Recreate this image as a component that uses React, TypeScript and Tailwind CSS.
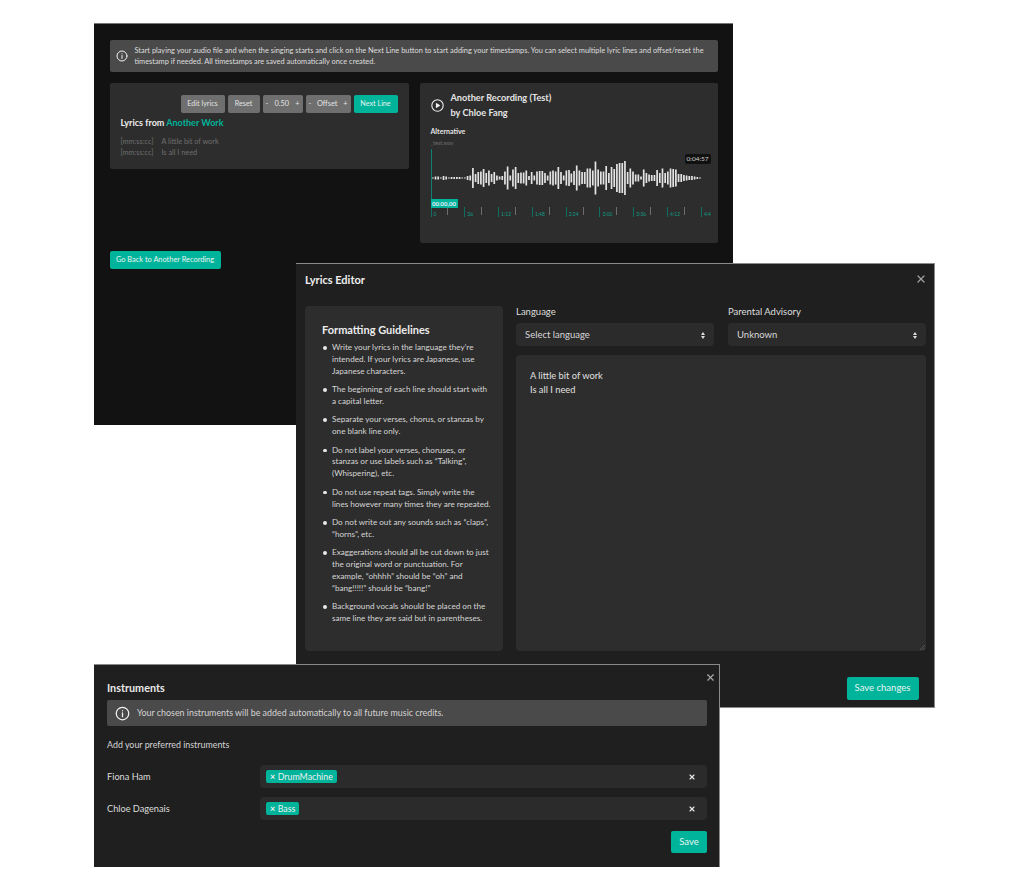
import type { ReactNode } from "react";
import { X } from "lucide-react";

const barsA = [1,3,3,1,4,3,1,2,2,2,2,1,1,4,5,20,8,12,13,18,10,15,8,12,5,3,4,13,23,5,17,22,10,11,11,15,4,12,5,13,14,14,10,5,13,15,13,22,12,5,15,16];
const barsB = [9,14,25,15,12,12,19,19,15,33,17,13,13,24,10,22,18,28,30,30,34,12,19,13,7,7,3,17,10,7,6,6,16,10,19,10,13,19,18,17,8,8,6,5,4,4,3,2,1];
const teal = ["0","36","1:12","1:48","2:24","3:00","3:36","4:12","4:4"];

const guidelines = [
  "Write your lyrics in the language they’re\nintended. If your lyrics are Japanese, use\nJapanese characters.",
  "The beginning of each line should start with\na capital letter.",
  "Separate your verses, chorus, or stanzas by\none blank line only.",
  "Do not label your verses, choruses, or\nstanzas or use labels such as “Talking”,\n(Whispering), etc.",
  "Do not use repeat tags. Simply write the\nlines however many times they are repeated.",
  "Do not write out any sounds such as “claps”,\n“horns”, etc.",
  "Exaggerations should all be cut down to just\nthe original word or punctuation. For\nexample, “ohhhh” should be “oh” and\n“bang!!!!!” should be “bang!”",
  "Background vocals should be placed on the\nsame line they are said but in parentheses.",
];

const InfoIcon = ({ size }: { size: number }) => (
  <svg width={size} height={size} viewBox="0 0 24 24" fill="none" stroke="#f2f2f2" strokeWidth="2" strokeLinecap="round" className="shrink-0">
    <circle cx="12" cy="12" r="10" />
    <path d="M12 11v6" />
    <path d="M12 7.5v.2" />
  </svg>
);

const SelectArrows = () => (
  <svg width="4" height="7" viewBox="0 0 4 7" fill="#dcdcdc" className="shrink-0">
    <path d="M2 0l2 3H0z" />
    <path d="M2 7L0 4h4z" />
  </svg>
);

const GreyBtn = ({ children, w }: { children: ReactNode; w: string }) => (
  <div className={`flex h-[18px] items-center justify-center rounded-[2px] bg-[#6f6f6f] text-[7.2px] text-[#e2e2e2] ${w}`}>{children}</div>
);

const Stepper = ({ value, w }: { value: string; w: string }) => (
  <div className={`flex h-[18px] items-center justify-between rounded-[2px] bg-[#6f6f6f] px-[3px] text-[7.4px] text-[#e2e2e2] ${w}`}>
    <span>-</span>
    <span>{value}</span>
    <span>+</span>
  </div>
);

const Waveform = () => (
  <svg width="280" height="40" viewBox="0 0 280 40" className="block">
    {barsA.map((h, i) => (
      <rect key={i} x={i * 2.67 + 1} y={20 - h / 2} width="1.7" height={h} fill="#e4e4e4" />
    ))}
    {barsB.map((h, i) => (
      <rect key={i} x={i * 2.68 + 139.5} y={20 - h / 2} width="1.7" height={h} fill="#e4e4e4" />
    ))}
  </svg>
);

const Timeline = () => (
  <div className="flex h-[10px] w-[288px] overflow-hidden">
    {teal.map((t, i) => (
      <div key={t} className="flex w-[33.8px] shrink-0">
        <div className="flex w-[16.9px] shrink-0 items-end border-l border-[#0d6f60] pl-[2px] text-[5px] leading-[6px] text-[#0f9c86]">{t}</div>
        {i < 8 && <div className="h-[8px] border-l border-[#6d6d6d]" />}
      </div>
    ))}
  </div>
);

const TagRow = ({ name, tag }: { name: string; tag: string }) => (
  <div className="flex items-center">
    <div className="w-[153px] text-[9.2px] text-[#dcdcdc]">{name}</div>
    <div className="flex h-[23px] flex-1 items-center justify-between rounded-[4px] bg-[#2b2b2b] pl-[6px] pr-[11px]">
      <div className="flex h-[13px] items-center gap-[2.5px] rounded-[2px] bg-[#00b39b] px-[4px] text-[8.8px] text-[#f0f0f0]">
        <span className="text-[9px] font-bold">×</span>
        {tag}
      </div>
      <X size={8} strokeWidth={3.5} color="#e6e6e6" />
    </div>
  </div>
);

export default function App() {
  return (
    <div className="relative h-[886px] w-[1024px] overflow-hidden bg-white font-['Lato','Liberation_Sans',sans-serif]">
      {/* Timestamps window */}
      <div className="absolute left-[94px] top-[23px] h-[402px] w-[639px] border-t border-[#777] bg-[#121212] px-[15.5px] pt-[16px]">
        <div className="flex h-[32px] items-center gap-[7px] rounded-[2px] bg-[#4a4a4a] px-[6px]">
          <InfoIcon size={12} />
          <p className="text-[7.4px] leading-[11px] text-[#dedede]">
            Start playing your audio file and when the singing starts and click on the Next Line button to start adding your timestamps. You can select multiple lyric lines and offset/reset the timestamp if needed. All timestamps are saved automatically once created.
          </p>
        </div>

        <div className="mt-[11px] flex gap-[11px]">
          <div className="h-[86px] w-[299px] rounded-[2px] bg-[#2d2d2d] pl-[11px] pr-[11px] pt-[12px]">
            <div className="flex justify-end gap-[3px]">
              <GreyBtn w="w-[44px]">Edit lyrics</GreyBtn>
              <GreyBtn w="w-[32px]">Reset</GreyBtn>
              <Stepper value="0.50" w="w-[40px]" />
              <Stepper value="Offset" w="w-[45px]" />
              <div className="flex h-[18px] w-[44px] items-center justify-center rounded-[2px] bg-[#00b39b] text-[7.2px] text-[#e8f5f2]">Next Line</div>
            </div>
            <div className="mt-[3px] text-[9px] font-bold leading-[14px] text-[#ececec]">
              Lyrics from <span className="text-[#00b39b]">Another Work</span>
            </div>
            <div className="mt-[6px] text-[7.3px] leading-[11px] text-[#6e6e6e]">
              <div className="flex gap-[8px]"><span>[mm:ss:cc]</span><span>A little bit of work</span></div>
              <div className="flex gap-[8px]"><span>[mm:ss:cc]</span><span>Is all I need</span></div>
            </div>
          </div>

          <div className="h-[160px] w-[298px] rounded-[2px] bg-[#2d2d2d] pl-[11px] pt-[8px]">
            <div className="flex items-center gap-[7px]">
              <svg width="13" height="13" viewBox="0 0 24 24" fill="none" stroke="#f0f0f0" strokeWidth="2">
                <circle cx="12" cy="12" r="10.5" />
                <path d="M10 8.5l5.5 3.5-5.5 3.5z" fill="#f0f0f0" strokeLinejoin="round" />
              </svg>
              <div className="text-[9.2px] font-bold leading-[14.5px] text-[#e4e4e4]">
                <div>Another Recording (Test)</div>
                <div>by Chloe Fang</div>
              </div>
            </div>
            <div className="mt-[6px] text-[7px] font-bold leading-[10px] text-[#e4e4e4]">Alternative</div>
            <div className="mt-[4px] text-[5.5px] leading-[7px] text-[#6e6e6e]">_test.wav</div>

            <div className="relative mt-[2px] h-[50px] w-[288px]">
              <div className="absolute left-0 top-0 h-[50px] w-px bg-[#0d8070]" />
              <div className="absolute left-0 top-[8.5px]"><Waveform /></div>
              <div className="absolute left-[254px] top-[5px] rounded-[2px] bg-[#111] px-[2px] text-[6.5px] leading-[10px] text-[#d0d0d0]">0:04:57</div>
              <div className="absolute bottom-[-9px] left-0 h-[9px] w-[27px] bg-[#00b39b] text-center text-[6px] font-bold leading-[9px] text-[#eeeeff]">00:00,00</div>
            </div>
            <div className="mt-[8px]"><Timeline /></div>
          </div>
        </div>

        <div className="mt-[8px] flex h-[17.5px] w-[111px] items-center justify-center rounded-[2px] bg-[#00b39b] text-[7.4px] text-[#e8f5f2]">Go Back to Another Recording</div>
      </div>

      {/* Lyrics editor */}
      <div className="absolute left-[296px] top-[263px] h-[445px] w-[638.5px] border-b border-r border-t border-[#8a8a8a] bg-[#1f1f1f] pl-[9px] pr-[7px]">
        <div className="flex h-[42px] items-start justify-between pt-[8px]">
          <h2 className="text-[11px] font-bold leading-[15px] text-[#efefef]">Lyrics Editor</h2>
          <X size={12} strokeWidth={2.5} color="#a0a0a0" className="mt-[1px]" />
        </div>
        <div className="flex gap-[13px]">
          <div className="h-[345px] w-[198px] rounded-[4px] bg-[#2d2d2d] pl-[17px] pr-[10px] pt-[17px]">
            <h3 className="text-[11px] font-bold leading-[14px] text-[#ececec]">Formatting Guidelines</h3>
            <ul className="mt-[5px] flex flex-col gap-[6.7px]">
              {guidelines.map((g) => (
                <li key={g} className="relative whitespace-pre pl-[10px] text-[8.15px] leading-[11.8px] text-[#d6d6d6]">
                  <span className="absolute left-[1px] top-[4px] h-[3.5px] w-[3.5px] rounded-full bg-[#e8e8e8]" />
                  {g}
                </li>
              ))}
            </ul>
          </div>
          <div className="w-[410px]">
            <div className="flex gap-[14px]">
              {[["Language", "Select language"], ["Parental Advisory", "Unknown"]].map(([label, value]) => (
                <div key={label} className="w-[198px]">
                  <div className="-mt-px text-[9.5px] leading-[13px] text-[#dedede]">{label}</div>
                  <div className="mt-[5px] flex h-[23px] items-center justify-between rounded-[4px] bg-[#2b2b2b] pl-[9px] pr-[9px] pt-[1px] text-[9.5px] text-[#d8d8d8]">
                    {value}
                    <SelectArrows />
                  </div>
                </div>
              ))}
            </div>
            <div className="relative mt-[9px] h-[296px] rounded-[4px] bg-[#2d2d2d] pl-[14px] pt-[14px] text-[9.3px] leading-[13.5px] text-[#e0e0e0]">
              <div>A little bit of work</div>
              <div>Is all I need</div>
              <svg width="5" height="5" viewBox="0 0 5 5" className="absolute bottom-[1px] right-[1px]" stroke="#6a6a6a" strokeWidth="0.7">
                <path d="M0 5L5 0M2.5 5L5 2.5" />
              </svg>
            </div>
          </div>
        </div>
        <div className="mt-[26px] flex justify-end pr-[8px]">
          <div className="flex h-[23px] w-[72px] items-center justify-center rounded-[2px] bg-[#00b39b] text-[9.5px] text-[#e8f5f2]">Save changes</div>
        </div>
      </div>

      {/* Instruments */}
      <div className="absolute left-[94px] top-[664px] h-[203px] w-[626px] border-r border-t border-[#8a8a8a] bg-[#1f1f1f] pl-[13px] pr-[12px]">
        <X size={11} strokeWidth={2.5} color="#a8a8a8" className="absolute right-[3.5px] top-[7px]" />
        <h2 className="pt-[16px] text-[10.8px] font-bold leading-[13px] text-[#e8e8e8]">Instruments</h2>
        <div className="mt-[6px] flex h-[26px] items-center gap-[7px] rounded-[2px] bg-[#4a4a4a] pl-[8px] text-[8.9px] text-[#d4d4d4]">
          <InfoIcon size={15} />
          Your chosen instruments will be added automatically to all future music credits.
        </div>
        <div className="mt-[12px] text-[8.9px] leading-[13px] text-[#d4d4d4]">Add your preferred instruments</div>
        <div className="mt-[14px] flex flex-col gap-[9px]">
          <TagRow name="Fiona Ham" tag="DrumMachine" />
          <TagRow name="Chloe Dagenais" tag="Bass" />
        </div>
        <div className="mt-[11px] flex justify-end">
          <div className="flex h-[22px] w-[36px] items-center justify-center rounded-[2px] bg-[#00b39b] text-[9.5px] text-[#e8f5f2]">Save</div>
        </div>
      </div>
    </div>
  );
}
